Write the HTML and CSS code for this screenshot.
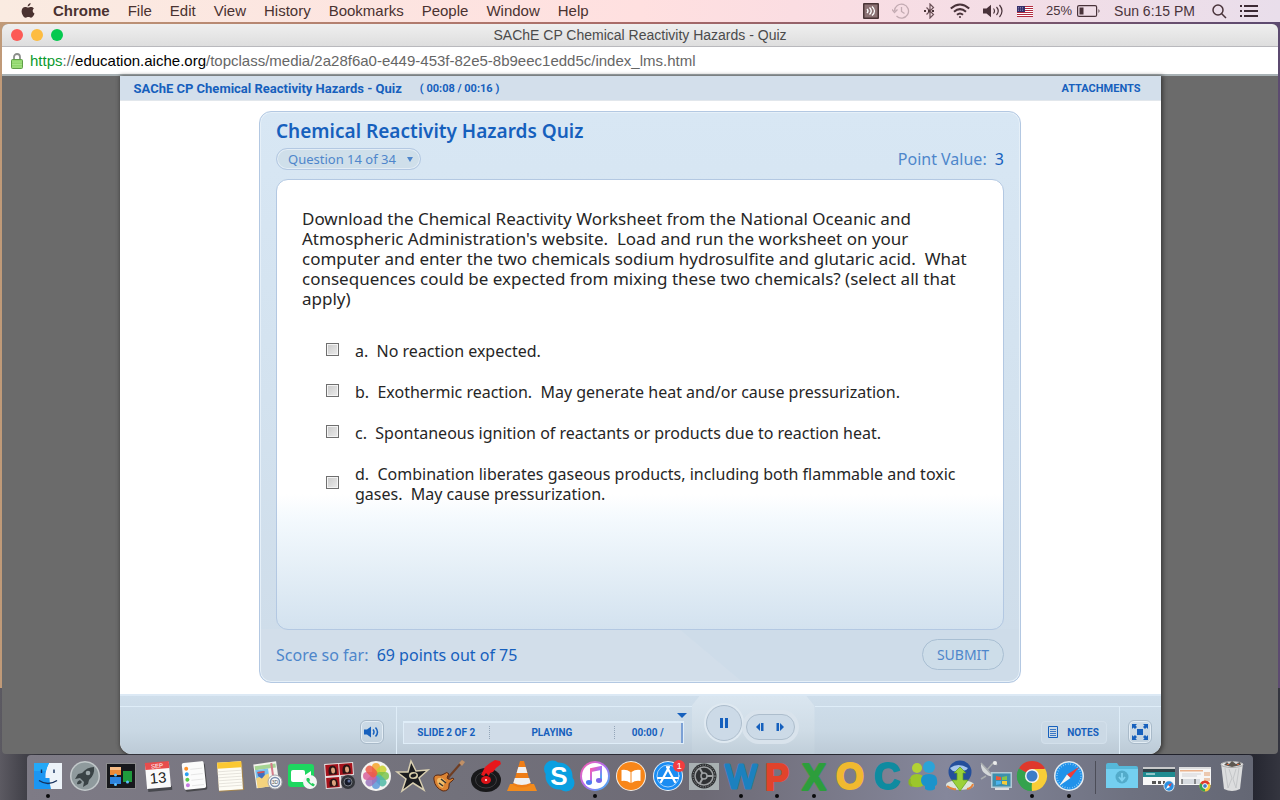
FILE: index.html
```html
<!DOCTYPE html>
<html lang="en">
<head>
  <meta charset="UTF-8">
  <meta name="viewport" content="width=device-width, initial-scale=1.0">
  <title>SAChE CP Chemical Reactivity Hazards - Quiz</title>
  <link rel="stylesheet" href="styles.css">
</head>
<body>
  <header class="menubar">
    <nav class="menu-left">
      <svg class="apple" viewBox="0 0 14 16"><path d="M9.6 0c.1 1.700-1.200 3.300-2.900 3.400C6.500 1.800 8 .2 9.600 0zM12.900 5.500c-1.800 1.200-1.500 4 .6 4.900-.6 1.700-2 4.300-3.500 4.300-1 0-1.400-.6-2.600-.6s-1.700.6-2.600.6C2.700 14.700.6 11 .6 8.200c0-2.800 1.800-4.300 3.600-4.300 1.200 0 2.100.7 2.900.7s1.900-.8 3.300-.7c1 0 1.900.5 2.500 1.600z"/></svg>
      <button class="menu-item app-name">Chrome</button>
      <button class="menu-item">File</button>
      <button class="menu-item">Edit</button>
      <button class="menu-item">View</button>
      <button class="menu-item">History</button>
      <button class="menu-item">Bookmarks</button>
      <button class="menu-item">People</button>
      <button class="menu-item">Window</button>
      <button class="menu-item">Help</button>
    </nav>
    <div class="menu-right">
      <svg width="16" height="16" viewBox="0 0 16 16"><rect width="16" height="16" rx="1" fill="#4a3436"/><rect x="1.500" y="1.500" width="13" height="13" fill="#8c7173"/><g fill="none" stroke="#fff" stroke-width="1.300"><path d="M4 6q2 2 0 4M6.500 4.500q3.500 3.500 0 7M9 3.500q5 4.500 0 9"/></g></svg>
      <svg width="18" height="16" viewBox="0 0 18 16" fill="none" stroke="#c3abb2" stroke-width="1.300"><path d="M2.500 8a7 7 0 1 1 2 5M0 6.500L2.500 9.500 5.500 6.500M9.500 4v4.500l3 2"/></svg>
      <svg width="14" height="16" viewBox="0 0 14 16" fill="none" stroke="#6b5157" stroke-width="1.200"><path d="M3.500 4.500l7 7L7 15V1l3.500 3.500-7 7"/><path d="M1 8h12" stroke="#4a3438" stroke-width="2" stroke-dasharray="2 2"/></svg>
      <svg width="20" height="16" viewBox="0 0 20 16" fill="none" stroke="#49333a" stroke-width="2"><path d="M.8 5.500Q10-2.500 19.200 5.500M4 8.800Q10 3.500 16 8.800M7 11.800q3-2.600 6 0"/><circle cx="10" cy="14" r="1" fill="#49333a" stroke="none"/></svg>
      <svg width="21" height="14" viewBox="0 0 21 14"><path d="M0 4.500h3.500L8 .8v12.400L3.500 9.500H0z" fill="#49333a"/><path d="M10.500 4.500q2 2.500 0 5M13.500 3q3.500 4 0 8M16.500 1q5 6 0 12" fill="none" stroke="#49333a" stroke-width="1.200"/></svg>
      <svg class="flag" width="16" height="11" viewBox="0 0 16 11"><rect width="16" height="11" fill="#fff"/><path d="M0 .5h16M0 2.500h16M0 4.500h16M0 6.500h16M0 8.500h16M0 10.500h16" stroke="#b32b41"/><rect width="8" height="6" fill="#36306b"/><path d="M1 1.500h6M1 3h6M1 4.500h6" stroke="#aaa6cf" stroke-width=".6" stroke-dasharray="1 1"/></svg>
      <span class="battery">25%
        <svg width="24" height="12" viewBox="0 0 24 12"><rect x=".6" y=".6" width="19" height="10.800" rx="1.500" fill="none" stroke="#49333a" stroke-width="1.200"/><rect x="2.500" y="2.500" width="4" height="7" fill="#49333a"/><path d="M21.500 4q2 2 0 4z" fill="#49333a"/></svg>
      </span>
      <span class="menu-clock">Sun 6:15 PM</span>
      <svg width="15" height="15" viewBox="0 0 15 15" fill="none" stroke="#49333a" stroke-width="1.500"><circle cx="6" cy="6" r="5"/><path d="M9.500 9.500l4.500 4.500"/></svg>
      <svg width="18" height="12" viewBox="0 0 18 12" stroke="#3c2a34" stroke-width="2"><path d="M0 1h2M4 1h14M0 6h2M4 6h14M0 11h2M4 11h14"/></svg>
    </div>
  </header>

  <main class="window">
    <div class="titlebar">
      <div class="lights">
        <button class="light red" aria-label="Close"></button>
        <button class="light yellow" aria-label="Minimize"></button>
        <button class="light green" aria-label="Zoom"></button>
      </div>
      <div class="window-title">SAChE CP Chemical Reactivity Hazards - Quiz</div>
    </div>
    <div class="urlbar">
      <svg width="12" height="16" viewBox="0 0 12 16"><path d="M3 8V4a3 3 0 0 1 6 0v4" fill="none" stroke="#8b8f8b" stroke-width="1.800"/><rect x=".5" y="6.500" width="11" height="9" rx="1" fill="#8fd66c" stroke="#5f9e48"/><path d="M1 9h10M1 11.500h10M1 14h10" stroke="#a9e48c" stroke-width=".8"/></svg>
      <div class="url"><span class="secure">https</span>://<span class="host">education.aiche.org</span>/topclass/media/2a28f6a0-e449-453f-82e5-8b9eec1edd5c/index_lms.html</div>
    </div>

    <div class="page">
      <div class="player">
        <div class="player-top">
          <h1 class="course-title">SAChE CP Chemical Reactivity Hazards - Quiz</h1>
          <span class="course-time">( 00:08 / 00:16 )</span>
          <button class="attachments">ATTACHMENTS</button>
        </div>

        <div class="slide">
          <form class="quiz">
            <h2 class="quiz-title">Chemical Reactivity Hazards Quiz</h2>
            <div class="quiz-info">
              <div class="question-picker">
                <select class="question-select" aria-label="Question">
                  <option>Question 14 of 34</option>
                </select>
              </div>
              <p class="points">Point Value: <span class="value">3</span></p>
            </div>
            <div class="question">
              <p class="question-text">Download the Chemical Reactivity Worksheet from the National Oceanic and Atmospheric Administration's website.&nbsp; Load and run the worksheet on your computer and enter the two chemicals sodium hydrosulfite and glutaric acid.&nbsp; What consequences could be expected from mixing these two chemicals? (select all that apply)</p>
              <div class="answers">
                <label class="answer"><input type="checkbox" class="tick"><span>a.&nbsp; No reaction expected.</span></label>
                <label class="answer"><input type="checkbox" class="tick"><span>b.&nbsp; Exothermic reaction.&nbsp; May generate heat and/or cause pressurization.</span></label>
                <label class="answer"><input type="checkbox" class="tick"><span>c.&nbsp; Spontaneous ignition of reactants or products due to reaction heat.</span></label>
                <label class="answer"><input type="checkbox" class="tick"><span>d.&nbsp; Combination liberates gaseous products, including both flammable and toxic gases.&nbsp; May cause pressurization.</span></label>
              </div>
            </div>
            <div class="quiz-footer">
              <p class="score">Score so far: <span class="value">69 points out of 75</span></p>
              <button type="button" class="submit">SUBMIT</button>
            </div>
          </form>
        </div>

        <div class="controls">
          <div class="section volume">
            <button class="square-btn" aria-label="Volume">
              <svg width="16" height="12" viewBox="0 0 16 12"><path d="M0 3.500h3L7 .5v11l-4-3H0z" fill="#1660bd"/><path d="M9 3.500q2 2.500 0 5M11.500 1.500q4 4.500 0 9" fill="none" stroke="#1660bd" stroke-width="1.500"/></svg>
            </button>
          </div>
          <div class="section status">
            <div class="status-box">
              <span class="cell slide-no">SLIDE 2 OF 2</span>
              <span class="cell state">PLAYING</span>
              <span class="cell clock">00:00 /</span>
              <span class="marker"></span>
            </div>
          </div>
          <div class="transport">
            <button class="pause" aria-label="Pause">
              <svg width="10" height="10" viewBox="0 0 10 10" fill="#1660bd"><path d="M1 0h3v10H1zM6 0h3v10H6z"/></svg>
            </button>
            <div class="skip">
              <button class="skip-btn" aria-label="Previous">
                <svg width="8" height="8" viewBox="0 0 8 8" fill="#1660bd"><path d="M0 4l4-4v8zM5 0h2.500v8H5z"/></svg>
              </button>
              <button class="skip-btn" aria-label="Next">
                <svg width="8" height="8" viewBox="0 0 8 8" fill="#1660bd"><path d="M8 4L4 0v8zM.5 0H3v8H.5z"/></svg>
              </button>
            </div>
          </div>
          <div class="section extras">
            <button class="notes-btn">
              <svg width="10" height="12" viewBox="0 0 10 12" fill="none" stroke="#1660bd"><path d="M.5.500h9v11h-9z"/><path d="M2 3.500h6M2 5.500h6M2 7.500h6M2 9.500h6" stroke-width=".8"/></svg>
              NOTES
            </button>
          </div>
          <div class="section full">
            <button class="square-btn" aria-label="Full screen">
              <svg width="16" height="16" viewBox="0 0 16 16" fill="#1660bd"><path d="M5 5h6v6H5zM0 0h5L3.500 1.500 5 3 3 5 1.500 3.500 0 5zM16 0h-5l1.500 1.500L11 3l2 2 1.500-1.500L16 5zM0 16h5l-1.500-1.500L5 13l-2-2-1.500 1.500L0 11zM16 16h-5l1.500-1.500L11 13l2-2 1.500 1.500L16 11z"/></svg>
            </button>
          </div>
        </div>
      </div>
    </div>
  </main>

  <footer class="dock">
    <div class="dock-apps">
      <!-- Finder -->
      <div class="app open"><svg viewBox="0 0 32 32"><rect x="2" y="3" width="28" height="26" fill="#edf3f9"/><path d="M2 3h15q-4 7-3.500 15h4q0 6 1.500 11H2z" fill="#1b96f2"/><path d="M2 3h15q-2 4-3 8H2z" fill="#23a9f8"/><path d="M9.500 9.500v3.500M22 9.500v3.500M7 20.500q9 6 18 0" fill="none" stroke="#14305c" stroke-width="1.400"/></svg></div>
      <!-- Launchpad -->
      <div class="app"><svg viewBox="0 0 32 32"><circle cx="16" cy="16" r="15" fill="#c3c9cb"/><circle cx="16" cy="16" r="13.500" fill="#8f9a9d"/><path d="M25 7q-7 0-12 6l-4 1-3 5 5-1 4 4-1 5 5-3 1-4q6-5 5-13z" fill="#3a4346"/><circle cx="19" cy="13" r="2.300" fill="#9ba6a9"/><path d="M8 24q0-3 3-4l2 2q-2 3-5 2z" fill="#3a4346"/></svg></div>
      <!-- Mission Control -->
      <div class="app"><svg viewBox="0 0 32 32"><rect x="1" y="3" width="30" height="26" fill="#8a8a8c"/><rect x="2" y="4" width="28" height="24" fill="#17181c"/><rect x="5" y="7" width="11" height="8" fill="#ee8a35"/><rect x="5" y="17" width="11" height="7" fill="#2d83dc"/><rect x="18" y="11" width="9" height="11" fill="#1f9a3c"/><path d="M5 7h11v3H5z" fill="#f8bd86"/><circle cx="10.500" cy="15" r="1.500" fill="#5ac0ff"/><circle cx="10.500" cy="24.500" r="1.500" fill="#5ac0ff"/><circle cx="22.500" cy="22" r="1.500" fill="#5ac0ff"/></svg></div>
      <!-- Calendar -->
      <div class="app"><svg viewBox="0 0 32 32"><g transform="rotate(-5 16 16)"><rect x="5" y="27" width="24" height="4" fill="#47484e"/><rect x="4" y="3" width="24" height="25" fill="#fafafa"/><path d="M4 2h24v7H4z" fill="#e84c4c"/><text x="16" y="8" class="cal-month">SEP</text><text x="16" y="23" class="cal-day">13</text></g></svg></div>
      <!-- Reminders -->
      <div class="app"><svg viewBox="0 0 32 32"><g transform="rotate(-6 16 16)"><rect x="6" y="4" width="22" height="27" rx="2" fill="#48484c"/><rect x="5" y="2" width="22" height="27" rx="2" fill="#fbfbfb"/><circle cx="9" cy="8" r="2" fill="#ff9028"/><circle cx="9" cy="13.500" r="2" fill="#2aa0f3"/><circle cx="9" cy="19" r="2" fill="#5bcb4b"/><circle cx="9" cy="24.500" r="2" fill="#c37be2"/><path d="M13 9h12M13 14.500h12M13 20h12M13 25.500h12" stroke="#d8d8d8" stroke-width=".6"/></g></svg></div>
      <!-- Notes -->
      <div class="app"><svg viewBox="0 0 32 32"><g transform="rotate(-4 16 16)"><rect x="4" y="2" width="25" height="29" fill="#a8864b"/><rect x="4" y="2" width="24" height="28" fill="#fdfcf5"/><rect x="4" y="2" width="24" height="6" fill="#fbc832"/><path d="M4 11h24M4 14h24M4 17h24M4 20h24M4 23h24M4 26h24" stroke="#dcdad2" stroke-width=".7"/></g></svg></div>
      <!-- Maps -->
      <div class="app"><svg viewBox="0 0 32 32"><g transform="rotate(-8 14 16)"><path d="M4 3h23v24H4z" fill="#f4f4ee"/><path d="M5 5h21v4H5z" fill="#a6d594"/><path d="M5 9h13v10H5z" fill="#7cc2ef"/><path d="M5 17l13-3v13H5z" fill="#f4d27d"/><path d="M22 4v22" stroke="#d67d8b" stroke-width="2"/><path d="M7 11h7v4q-3 3-3.500 3T7 15z" fill="#416dc0"/><path d="M7 11h7v1.500H7z" fill="#e0524f"/></g><circle cx="24" cy="22" r="7" fill="#f8f8f8" stroke="#a7a7ac"/><circle cx="24" cy="22" r="4.500" fill="none" stroke="#7a8fae" stroke-width="1.500"/><text x="24" y="24" class="tiny-label">3D</text></svg></div>
      <!-- FaceTime -->
      <div class="app"><svg viewBox="0 0 32 32"><rect x="1" y="4" width="26" height="23" rx="3" fill="#1ed760"/><rect x="4" y="10" width="14" height="12" rx="2" fill="#fff"/><path d="M18 15l6-4v10l-6-4z" fill="#fff"/><circle cx="23" cy="22" r="7" fill="#f4f6f5"/><path d="M20 18q-2 2 2 5.500T27 26l.8-1.500-2.200-1.500-1.200.7q-1.500-1-2.200-2.600l1-.9L22 18z" fill="#25cb5c"/></svg></div>
      <!-- Photo Booth -->
      <div class="app"><svg viewBox="0 0 32 32"><g transform="rotate(-4 16 16)"><path d="M1 3h29v13H17v12H1z" fill="#e7dede"/><path d="M2 4h13v11H2zM16 4h13v11H16zM2 17h13v10H2z" fill="#a5121b"/><path d="M5 14q-1-9 4-9t4 9zM19 14q-1-9 4-9t4 9zM5 26q-1-8 4-8t4 8z" fill="#2a1515"/><ellipse cx="9.500" cy="10" rx="2" ry="3" fill="#dba27d"/><ellipse cx="23.500" cy="10" rx="2" ry="3" fill="#dba27d"/><ellipse cx="9.500" cy="22.500" rx="2" ry="3" fill="#dba27d"/></g><circle cx="24" cy="22" r="7" fill="#33353a"/><circle cx="24" cy="22" r="4" fill="#161a27" stroke="#777b83"/><circle cx="25" cy="21" r="1.500" fill="#617099"/></svg></div>
      <!-- Photos -->
      <div class="app"><svg viewBox="0 0 32 32"><circle cx="16" cy="16" r="15" fill="#f5f4f1"/><g fill-opacity=".85"><rect x="12" y="3" width="8" height="13" rx="4" fill="#f6a42c"/><rect x="12" y="3" width="8" height="13" rx="4" fill="#c9d22e" transform="rotate(45 16 16)"/><rect x="12" y="3" width="8" height="13" rx="4" fill="#7ac34e" transform="rotate(90 16 16)"/><rect x="12" y="3" width="8" height="13" rx="4" fill="#4fb9a5" transform="rotate(135 16 16)"/><rect x="12" y="3" width="8" height="13" rx="4" fill="#5c98d9" transform="rotate(180 16 16)"/><rect x="12" y="3" width="8" height="13" rx="4" fill="#9a74bd" transform="rotate(225 16 16)"/><rect x="12" y="3" width="8" height="13" rx="4" fill="#d8609b" transform="rotate(270 16 16)"/><rect x="12" y="3" width="8" height="13" rx="4" fill="#ec5b46" transform="rotate(315 16 16)"/></g></svg></div>
      <!-- iMovie -->
      <div class="app"><svg viewBox="0 0 32 32"><path d="M14 1l5 10 12-1-9 8 5 12-11-7-11 8 4-12-9-7h11z" fill="#1b1c1f" stroke="#d8ceb0" stroke-width="1.500"/><ellipse cx="16.500" cy="15.500" rx="4.500" ry="3.500" fill="#d9cfa9"/><ellipse cx="16.500" cy="15.500" rx="3" ry="1.800" fill="#1c1c1e" transform="rotate(-20 16.500 15.500)"/></svg></div>
      <!-- GarageBand -->
      <div class="app"><svg viewBox="0 0 32 32"><path d="M14 19L28 3" stroke="#6f3d22" stroke-width="2"/><path d="M26 3l3-3 3 2-3 4z" fill="#c09066"/><path d="M1 20q-1-5 4-5 3 1 6-1 3-3 5 0-3 4-1 5t5-1q2 1-1 3-4 2-3 5 0 5-6 5-8-3-9-11z" fill="#dc8433" stroke="#592812"/><path d="M4 21q0-4 5-3l4 3q-3 3-3 7-5-1-6-7z" fill="#f3bd68"/><path d="M8 19l5 4M6 23l4 3" stroke="#333" stroke-width="1.500"/></svg></div>
      <!-- Vinyl -->
      <div class="app"><svg viewBox="0 0 32 32"><ellipse cx="16" cy="20" rx="15" ry="12" fill="#18181a"/><ellipse cx="16" cy="20" rx="10.500" ry="8" fill="none" stroke="#3d3d40"/><ellipse cx="16" cy="20" rx="5" ry="4" fill="#dd1318"/><path d="M11 15l4-8 5-4 5-3 5 1 1 3-5 4-3 4-3 1-1 3-3-3-2 3z" fill="#e8171b"/><circle cx="16" cy="20" r="1" fill="#fff"/></svg></div>
      <!-- VLC -->
      <div class="app"><svg viewBox="0 0 32 32"><path d="M4 24h24l3 7H1z" fill="#f28b1d"/><path d="M14 1h4l7 24q-9 5-18 0z" fill="#ef7e16"/><path d="M12.300 7h7.400l1.700 6H10.600zM8.800 18h14.400l1.500 5q-9 4-17.400 0z" fill="#f0f0f0"/></svg></div>
      <!-- Skype -->
      <div class="app"><svg viewBox="0 0 32 32"><circle cx="16" cy="16" r="13.500" fill="#0a9fe0"/><circle cx="9.500" cy="9" r="8.500" fill="#0a9fe0"/><circle cx="23" cy="23" r="8.500" fill="#0a9fe0"/><text x="16" y="25" class="skype-s">S</text></svg></div>
      <!-- iTunes -->
      <div class="app open"><svg viewBox="0 0 32 32"><defs><linearGradient id="tunes" x1="0" y1="0" x2="1" y2="1"><stop offset="0" stop-color="#ff5ea8"/><stop offset=".5" stop-color="#b16bf0"/><stop offset="1" stop-color="#2ebaf3"/></linearGradient></defs><circle cx="16" cy="16" r="15" fill="url(#tunes)"/><circle cx="16" cy="16" r="13" fill="#fff"/><path d="M12 22V9l10-2v13M12 11l10-2" fill="none" stroke="url(#tunes)" stroke-width="2"/><ellipse cx="10" cy="22.500" rx="3" ry="2.400" fill="#4a7df0"/><ellipse cx="20" cy="20.500" rx="3" ry="2.400" fill="#7a66e8"/></svg></div>
      <!-- iBooks -->
      <div class="app"><svg viewBox="0 0 32 32"><circle cx="16" cy="16" r="15" fill="#f5ede4"/><circle cx="16" cy="16" r="14" fill="#f88619"/><path d="M15.500 12q-4-3-9-2v11q5-1 9 2zM16.500 12q4-3 9-2v11q-5-1-9 2z" fill="#fff"/></svg></div>
      <!-- App Store -->
      <div class="app"><svg viewBox="0 0 32 32"><circle cx="16" cy="16" r="15" fill="#e9f2fa"/><circle cx="16" cy="16" r="14" fill="#1a8cf2"/><g stroke="#fff" stroke-width="2.200" stroke-linecap="round" fill="none"><path d="M17 7L9 22M15 7l8 15M6 18h20"/><circle cx="16" cy="16" r="11" stroke-width=".6"/></g></svg><span class="badge">1</span></div>
      <!-- System Preferences -->
      <div class="app"><svg viewBox="0 0 32 32"><rect x="1" y="3" width="30" height="27" fill="#a8b0b2"/><circle cx="16" cy="16" r="12.500" fill="#2f3133"/><circle cx="16" cy="16" r="9" fill="none" stroke="#9ea1a3" stroke-width="1.500"/><circle cx="16" cy="16" r="11" fill="none" stroke="#9ea1a3" stroke-dasharray="1 1.500"/><path d="M16 16h9M16 16l-4.500 8M16 16l-4.500-8" stroke="#9ea1a3" stroke-width="2"/><circle cx="16" cy="16" r="3" fill="#2f3133" stroke="#9ea1a3" stroke-width="1.500"/></svg></div>
      <!-- Office -->
      <div class="app open"><svg viewBox="0 0 32 32"><text x="16" y="28" class="office word">W</text></svg></div>
      <div class="app open"><svg viewBox="0 0 32 32"><text x="16" y="30" class="office powerpoint">P</text></svg></div>
      <div class="app open"><svg viewBox="0 0 32 32"><text x="16" y="30" class="office excel">X</text></svg></div>
      <div class="app"><svg viewBox="0 0 32 32"><text x="16" y="29" class="office outlook">O</text></svg></div>
      <div class="app"><svg viewBox="0 0 32 32"><text x="16" y="29" class="office communicator">C</text></svg></div>
      <!-- Messenger -->
      <div class="app"><svg viewBox="0 0 32 32"><circle cx="10" cy="8" r="5" fill="#b3d234"/><path d="M3 20q0-6 7-6t7 6v5q-5 4-13 1z" fill="#9cc62b"/><circle cx="22" cy="7" r="6" fill="#2ba4d8"/><path d="M14 20q0-6 8-6t8 6q1 5-2 6v3q-5 3-10 0v-3q-4-1-4-6z" fill="#1b93cb"/><path d="M3 19q-2 5 2 7" stroke="#8ab61f" stroke-width="2" fill="none"/></svg></div>
      <!-- Globe download -->
      <div class="app"><svg viewBox="0 0 32 32"><ellipse cx="16" cy="25" rx="14" ry="5" fill="#dce4dc"/><path d="M3 26q5 4 9 3M29 24q-1 4-6 5" stroke="#e3803c" stroke-width="2" fill="none"/><circle cx="16" cy="12" r="11.500" fill="#244f9b"/><path d="M6 8q8-6 18 0-2 4-8 2-6 4-10-2z" fill="#a5c6ec"/><path d="M16 7l6 6h-3v7h5l-8 11-8-11h5v-7h-3z" fill="#9bd13a" stroke="#5d9c20" stroke-width=".7"/></svg></div>
      <!-- Remote Desktop -->
      <div class="app"><svg viewBox="0 0 32 32"><path d="M1 3q-1 12 13 14z" fill="#d5d8d9"/><path d="M1 3l13 14M7 10l7-8 3 3M6 16l-5 3" stroke="#a9adaf" stroke-width="1.500" fill="none"/><circle cx="15" cy="3" r="2" fill="#eee"/><path d="M11 12h21v16H11z" fill="#b5cad5"/><path d="M12.500 13.500h18v13h-18z" fill="#3d8fae"/><path d="M16 16l5 1v3h-5z" fill="#ee5837"/><path d="M22 17l5-1v4h-5z" fill="#85c448"/><path d="M16 21h5v3l-5 1z" fill="#4ab3ee"/><path d="M22 21h5v4l-5-1z" fill="#f6cc3a"/><path d="M15 28h14v2H15z" fill="#dedede"/></svg></div>
      <!-- Chrome -->
      <div class="app open"><svg viewBox="0 0 32 32"><path d="M16 16L3 8.500A15 15 0 0 1 29 8.500z" fill="#e0382c"/><path d="M16 16L3 8.500A15 15 0 0 0 16 31z" fill="#35a24d"/><path d="M16 16l13-7.500A15 15 0 0 1 16 31z" fill="#f8cd37"/><path d="M16 9h13L22 18l-6 13-1-8z" fill="#f8cd37"/><path d="M3 8.500L10 19l6 4-1 8A15 15 0 0 1 3 8.500z" fill="#35a24d"/><circle cx="16" cy="16" r="7" fill="#f4f4f4"/><circle cx="16" cy="16" r="5.500" fill="#3c7dc8"/></svg></div>
      <!-- Safari -->
      <div class="app open"><svg viewBox="0 0 32 32"><circle cx="16" cy="16" r="15" fill="#e7ecf0"/><circle cx="16" cy="16" r="13.500" fill="#2192ea"/><circle cx="16" cy="16" r="12" fill="none" stroke="#b6ddfa" stroke-dasharray=".6 1.900" stroke-width="1.500"/><path d="M26 7L17.500 18 14 14.500z" fill="#f03a35"/><path d="M6 26l8-11.500 3.500 3.500z" fill="#f5f5f5"/></svg></div>
    </div>
    <div class="dock-divider"></div>
    <div class="dock-files">
      <!-- Downloads -->
      <div class="app"><svg viewBox="0 0 32 32"><path d="M0 5q0-2 2-2h9l2 3h17q2 0 2 2v20H0z" fill="#56b8d9"/><path d="M0 9h32v19H0z" fill="#74cff0"/><circle cx="16" cy="17" r="6.500" fill="#53abca"/><path d="M16 13v7M13 17l3 3.500 3-3.500" stroke="#7fd3f1" stroke-width="1.800" fill="none"/></svg></div>
      <!-- Minimized Safari window -->
      <div class="app"><svg viewBox="0 0 32 32"><path d="M0 7h32v18H0z" fill="#f7f7f7"/><path d="M0 7h32v2H0z" fill="#c9c9cb"/><path d="M0 9h32v3H0z" fill="#314047"/><path d="M0 12h32v5H0z" fill="#1f8b91"/><path d="M3 14h9" stroke="#fff"/><path d="M9 21h4v3H9zM15 21h3v3h-3zM20 21h2v3h-2z" fill="#555"/><circle cx="26" cy="26" r="5.500" fill="#dfe8ef"/><circle cx="26" cy="26" r="4.700" fill="#278fe3"/><path d="M29 23l-2 4-2-2z" fill="#ef4540"/><path d="M23 29l2-4 2 2z" fill="#fff"/></svg></div>
      <!-- Minimized Chrome window -->
      <div class="app"><svg viewBox="0 0 32 32"><path d="M0 7h32v18H0z" fill="#f6f6f6"/><path d="M0 7h32v2H0z" fill="#dcdcde"/><path d="M1 10h23v1.500H1z" fill="#ecb28b"/><path d="M25 12h6v4h-6zM25 18h6v3h-6z" fill="#ecc9b0"/><path d="M3 14h19M3 16h15" stroke="#c3c3c8" stroke-width=".7"/><path d="M3 19h18v5H3z" fill="#d7dbe0"/><path d="M3 19v5M16 19v5" stroke="#333"/><circle cx="26" cy="26" r="5.500" fill="#f6cc38"/><path d="M26 26l-4.800-2.700a5.500 5.500 0 0 1 9.600 0z" fill="#df3b2e"/><path d="M26 26l-4.800-2.700a5.500 5.500 0 0 0 4.800 8.200z" fill="#37a34e"/><circle cx="26" cy="26" r="2.400" fill="#3e7ec8" stroke="#fff"/></svg></div>
      <!-- Trash -->
      <div class="app"><svg viewBox="0 0 32 32"><path d="M5 3h22l-3 26q-8 4-16 0z" fill="#dcddde"/><path d="M9 8l3 20M23 8l-3 20M13 9l3 9-4 10M20 9l-3 10 3 9" stroke="#c4c6c8" fill="none"/><ellipse cx="16" cy="4.500" rx="11" ry="3" fill="#e9e9ea" stroke="#aaa"/><path d="M8 5l3-3 2 2 3-3 4 3 4-2 1 3-9 2z" fill="#5d5750"/><path d="M11 4h2v1h-2zM21 4h2v1h-2z" fill="#d5643c"/></svg></div>
    </div>
  </footer>
</body>
</html>
```
FILE: styles.css
```css
:root {
  --blue: #1660bd;
  --blue-soft: #4e86cb;
  --line: #dfedf8;
  --edge: #b3c8e2;
  --ink: #4a3230;
  --ui: "Liberation Sans", Arial, sans-serif;
  --quiz: "Noto Sans", "Open Sans", sans-serif;
  --label: Roboto, "Liberation Sans", sans-serif;
}
* {
  box-sizing: border-box;
}
body {
  margin: 0;
  min-height: 100vh;
  display: flex;
  flex-direction: column;
  font-family: var(--ui);
  background: linear-gradient(90deg, #c09a78 0, #a86a68 50%, #5c4a70 100%) 0 0 / 100% 86% no-repeat, linear-gradient(90deg, #5c5a62, #34343c 3%, #20212b 97%, #34353f);
}
button {
  margin: 0;
  padding: 0;
  border: none;
  background: none;
  font: inherit;
  color: inherit;
  cursor: pointer;
}
h1, h2, p {
  margin: 0;
}
svg {
  display: block;
  flex: none;
}

/* menu bar */
.menubar {
  height: 22px;
  margin-bottom: 2px;
  padding: 0 22px 0 21px;
  display: flex;
  align-items: center;
  justify-content: space-between;
  font-size: 15px;
  line-height: 22px;
  color: var(--ink);
  background: linear-gradient(90deg, #faebe1 0, #ffe0e0 50%, #fbdde2 62%, #e9deeb 100%);
}
.menu-left {
  display: flex;
  align-items: center;
  gap: 18px;
}
.apple {
  width: 14px;
  height: 16px;
  fill: var(--ink);
}
.app-name {
  font-weight: bold;
}
.menu-right {
  display: flex;
  align-items: center;
  gap: 13px;
  font-size: 14px;
  color: #49333a;
}
.battery {
  display: flex;
  align-items: center;
  gap: 5px;
  font-size: 13px;
}
.menu-clock {
  margin-right: 4px;
}

/* browser window */
.window {
  flex: 1;
  margin: 0 2px 1px;
  display: flex;
  flex-direction: column;
  border-radius: 6px 6px 4px 4px;
  overflow: hidden;
  background: #6b6b6b;
}
.titlebar {
  height: 23px;
  display: flex;
  align-items: center;
  padding: 0 9px;
  border-bottom: 1px solid #b9b9bd;
  background: linear-gradient(#efefef, #dedede);
}
.lights {
  width: 60px;
  display: flex;
  gap: 8px;
}
.light {
  width: 12px;
  height: 12px;
  border-radius: 50%;
}
.red {
  background: #fc5a56;
}
.yellow {
  background: #fdbc40;
}
.green {
  background: #05c94f;
}
.window-title {
  flex: 1;
  padding-right: 60px;
  text-align: center;
  font-size: 14px;
  color: #4b4b4b;
}
.urlbar {
  height: 29px;
  display: flex;
  align-items: center;
  gap: 7px;
  padding: 0 9px;
  border-bottom: 2px solid #a9b2b5;
  background: #fff;
}
.url {
  font-size: 15px;
  color: #666;
}
.secure {
  color: #0b9a2e;
}
.host {
  color: #000;
}

/* course player */
.page {
  flex: 1;
  display: flex;
  justify-content: center;
}
.player {
  width: 100%;
  max-width: 1041px;
  display: flex;
  flex-direction: column;
  border-radius: 0 0 12px 12px;
  overflow: hidden;
  background: #fff;
  box-shadow: 1px 1px 4px 1px #3a3a3a;
}
.player-top {
  height: 25px;
  display: flex;
  align-items: center;
  padding: 0 20px 0 14px;
  border-bottom: 1px solid #e2e7ec;
  background: #d3dfeb;
  font-family: var(--label);
  font-weight: bold;
  font-size: 11px;
  color: var(--blue);
}
.course-title {
  font-size: 13px;
}
.course-time {
  margin-left: 18px;
}
.attachments {
  margin-left: auto;
}
.slide {
  flex: 1;
  display: flex;
  justify-content: center;
  padding: 10px 20px 11px;
}
.quiz {
  width: 100%;
  max-width: 762px;
  display: flex;
  flex-direction: column;
  padding: 7px 16px 0;
  border: 1px solid var(--edge);
  border-radius: 12px;
  box-shadow: inset 0 0 0 1px #e6f0f8;
  background: linear-gradient(40deg, #d2deea calc(50% + 45px), #cedce9 calc(50% + 46px)) 0 100% / 100% 53px no-repeat, linear-gradient(#d8e7f4, #d3e2ef 50%, #cedce9);
  font-family: var(--quiz);
  color: var(--blue-soft);
}
.quiz-title {
  font-size: 19px;
  line-height: 24px;
  font-weight: 600;
  color: var(--blue);
}
.quiz-info {
  display: flex;
  align-items: center;
  justify-content: space-between;
  padding: 5px 0 9px;
}
.question-picker {
  position: relative;
}
.question-picker::after {
  content: "";
  position: absolute;
  right: 8px;
  top: 9px;
  border: 3px solid transparent;
  border-top: 5px solid var(--blue-soft);
  border-bottom: 0;
  pointer-events: none;
}
.question-select {
  appearance: none;
  display: block;
  width: 145px;
  height: 22px;
  padding: 0 11px;
  border: 1px solid var(--edge);
  border-radius: 11px;
  box-shadow: inset 0 0 0 1px #e3edf6;
  background: #cfdfea;
  font-family: var(--quiz);
  font-size: 13px;
  color: var(--blue-soft);
}
.points, .score {
  font-size: 16px;
  line-height: 20px;
}
.value {
  margin-left: 4px;
  color: var(--blue);
}
.question {
  flex: 1;
  padding: 29px 25px;
  border: 1px solid var(--edge);
  border-radius: 12px;
  background: linear-gradient(#fff 70%, #f3f9fd 76%, #d3e2ef);
  font-size: 16px;
  line-height: 20px;
  color: #262626;
}
.question-text {
  font-size: 17px;
}
.answers {
  display: flex;
  flex-direction: column;
  gap: 21px;
  padding: 32px 16px 0 24px;
}
.answer {
  display: flex;
  align-items: center;
  gap: 16px;
}
.tick {
  appearance: none;
  flex: none;
  width: 13px;
  height: 13px;
  margin: 0 0 4px;
  border: 1px solid #6f6f6f;
  box-shadow: inset 0 0 0 1px #f4f4f4;
  background: linear-gradient(135deg, #c9c9c9, #ececec);
}
.quiz-footer {
  height: 52px;
  display: flex;
  align-items: center;
  justify-content: space-between;
  padding-bottom: 3px;
}
.submit {
  width: 82px;
  height: 31px;
  border: 1px solid #a9bfd3;
  border-radius: 16px;
  background: #cddde9;
  font-size: 14px;
}

/* player controls */
.controls {
  height: 60px;
  display: flex;
  border-top: 2px solid #dce9f5;
  background: linear-gradient(#cfdeeb, #c9d8e4 60%, #bccad6);
  font-family: var(--label);
  font-weight: bold;
  font-size: 10px;
  color: var(--blue);
}
.section {
  margin-top: 10px;
  display: flex;
  align-items: center;
  border-top: 1px solid var(--line);
}
.volume {
  flex: 277 1 277px;
  justify-content: flex-end;
  padding-right: 12px;
  border-right: 1px solid var(--line);
}
.status {
  flex: 295 1 295px;
  padding: 3px 8px 0 6px;
}
.square-btn {
  width: 24px;
  height: 24px;
  margin-top: 3px;
  display: flex;
  align-items: center;
  justify-content: center;
  border: 1px solid #a9bac9;
  border-radius: 6px;
  box-shadow: inset 0 0 0 1px #e3edf5;
}
.status-box {
  position: relative;
  width: 100%;
  height: 23px;
  display: flex;
  align-items: center;
  border: 1px solid var(--line);
  border-top-width: 2px;
  background: #d0dce8;
}
.cell {
  line-height: 13px;
  text-align: center;
}
.slide-no {
  flex: 86;
  border-right: 1px dotted #93a5b8;
}
.state {
  flex: 125;
  border-right: 1px dotted #93a5b8;
}
.clock {
  flex: 66;
}
.marker {
  align-self: stretch;
  width: 2px;
  background: #7ba0d5;
}
.marker::before {
  content: "";
  position: absolute;
  right: -4px;
  top: -10px;
  border: 5px solid transparent;
  border-top: 5px solid var(--blue);
  border-bottom: 0;
}
.transport {
  flex: 123 1 123px;
  display: flex;
  align-items: center;
  justify-content: center;
  gap: 4px;
  padding: 0 6px 4px 0;
  background: linear-gradient(#dae6f0, #cfdce6 60%, #c0ced9);
  clip-path: polygon(8px 0, calc(100% - 8px) 0, 100% 10px, 100% 100%, 0 100%, 0 10px);
}
.pause {
  width: 36px;
  height: 36px;
  display: flex;
  align-items: center;
  justify-content: center;
  border: 1px solid #adbdcc;
  border-radius: 50%;
  background: #ccdae7;
  box-shadow: 0 0 0 2px #dfe9f1;
}
.skip {
  width: 49px;
  height: 26px;
  margin-top: 8px;
  padding: 0 3px;
  display: flex;
  border: 1px solid #adbdcc;
  border-radius: 13px;
  background: #ccdae7;
  box-shadow: 0 0 0 4px #d9e3ec;
}
.skip-btn {
  flex: 1;
  display: flex;
  align-items: center;
  justify-content: center;
}
.extras {
  flex: 304 1 304px;
  justify-content: flex-end;
  padding-right: 12px;
}
.notes-btn {
  width: 66px;
  height: 23px;
  margin-top: 3px;
  display: flex;
  align-items: center;
  justify-content: center;
  gap: 9px;
  border: 1px solid #d3e0eb;
  border-radius: 4px;
  background: #cbd9e5;
}
.full {
  flex: 42 1 42px;
  justify-content: center;
  border-left: 1px solid var(--line);
}

/* dock */
.dock {
  height: 45px;
  margin: 0 27px;
  padding: 0 3px;
  display: flex;
  border-radius: 4px 4px 0 0;
  background: linear-gradient(90deg, #7e7b86, #72717b 35%, #6d6a75 55%, #85879b 75%, #6e7180 90%, #646774);
}
.dock-apps {
  flex: 29;
  display: flex;
}
.dock-divider {
  width: 1px;
  margin: 6px 8px;
  background: #4c4d58;
}
.dock-files {
  flex: 4;
  display: flex;
}
.app {
  position: relative;
  flex: 1;
  display: flex;
  justify-content: center;
  padding-top: 5px;
}
.app svg {
  width: 32px;
  height: 32px;
  overflow: visible;
}
.open::after {
  content: "";
  position: absolute;
  bottom: 2px;
  width: 4px;
  height: 4px;
  border-radius: 50%;
  background: #0a0a0c;
}
.badge {
  position: absolute;
  top: 5px;
  right: 1px;
  width: 12px;
  height: 12px;
  border-radius: 50%;
  background: #f23c3f;
  color: #fff;
  font-size: 9px;
  line-height: 12px;
  text-align: center;
}
.cal-month, .cal-day, .tiny-label, .skype-s, .office {
  font-family: var(--ui);
  text-anchor: middle;
}
.cal-month {
  font-size: 6px;
  fill: #fff;
}
.cal-day {
  font-size: 15px;
  fill: #222;
}
.tiny-label {
  font-size: 5px;
  fill: #555;
}
.skype-s {
  font-size: 26px;
  font-weight: bold;
  fill: #fff;
}
.office {
  font-size: 36px;
  font-weight: bold;
  stroke-width: 2px;
  stroke-linejoin: round;
}
.word {
  font-size: 33px;
  font-weight: normal;
  stroke-width: 3px;
  fill: #1c81bf;
  stroke: #1c81bf;
}
.powerpoint {
  fill: #e1432b;
  stroke: #e1432b;
}
.excel {
  fill: #2d9e3c;
  stroke: #2d9e3c;
}
.outlook {
  fill: #f0b92f;
  stroke: #f0b92f;
}
.communicator {
  fill: #0f8ba0;
  stroke: #0f8ba0;
}
```
